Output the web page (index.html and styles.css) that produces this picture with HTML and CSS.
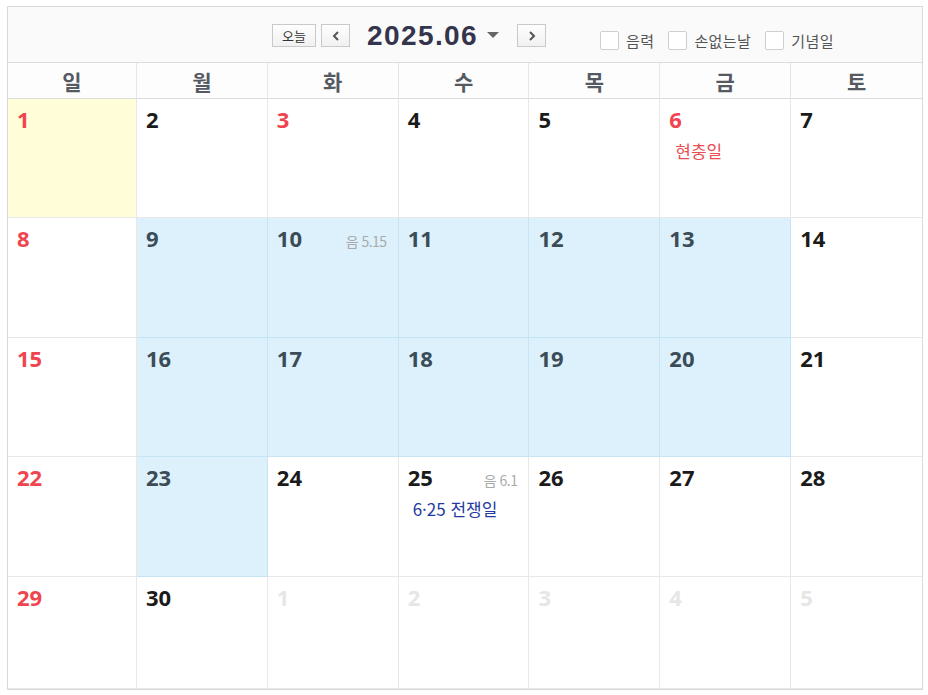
FILE: index.html
```html
<!DOCTYPE html>
<html lang="ko">
<head>
<meta charset="utf-8">
<link rel="stylesheet" href="styles.css">
</head>
<body>
<div class="cal">
  <div class="toolbar">
    <div class="nav">
      <button class="btn today">오늘</button>
      <button class="btn arrow"><svg width="10" height="12" viewBox="0 0 10 12"><path d="M7 2 L3 6 L7 10" fill="none" stroke="#555" stroke-width="2"/></svg></button>
      <div class="title">2025.06<svg class="caret" width="12" height="7" viewBox="0 0 12 7"><path d="M0 0 H12 L6 6 Z" fill="#666"/></svg></div>
      <button class="btn arrow"><svg width="10" height="12" viewBox="0 0 10 12"><path d="M3 2 L7 6 L3 10" fill="none" stroke="#555" stroke-width="2"/></svg></button>
    </div>
    <div class="opts">
      <label class="opt"><span class="box"></span>음력</label>
      <label class="opt"><span class="box"></span>손없는날</label>
      <label class="opt"><span class="box"></span>기념일</label>
    </div>
  </div>
  <div class="grid">
    <div class="wd">일</div><div class="wd">월</div><div class="wd">화</div><div class="wd">수</div><div class="wd">목</div><div class="wd">금</div><div class="wd">토</div>

    <div class="cell today-cell"><span class="num red">1</span></div>
    <div class="cell"><span class="num">2</span></div>
    <div class="cell"><span class="num red">3</span></div>
    <div class="cell"><span class="num">4</span></div>
    <div class="cell"><span class="num">5</span></div>
    <div class="cell"><span class="num red">6</span><div class="ev red">현충일</div></div>
    <div class="cell"><span class="num">7</span></div>

    <div class="cell"><span class="num red">8</span></div>
    <div class="cell blue"><span class="num">9</span></div>
    <div class="cell blue"><div class="top"><span class="num">10</span><span class="lunar">음 5.15</span></div></div>
    <div class="cell blue"><span class="num">11</span></div>
    <div class="cell blue"><span class="num">12</span></div>
    <div class="cell blue"><span class="num">13</span></div>
    <div class="cell"><span class="num">14</span></div>

    <div class="cell"><span class="num red">15</span></div>
    <div class="cell blue"><span class="num">16</span></div>
    <div class="cell blue"><span class="num">17</span></div>
    <div class="cell blue"><span class="num">18</span></div>
    <div class="cell blue"><span class="num">19</span></div>
    <div class="cell blue"><span class="num">20</span></div>
    <div class="cell"><span class="num">21</span></div>

    <div class="cell"><span class="num red">22</span></div>
    <div class="cell blue"><span class="num">23</span></div>
    <div class="cell"><span class="num">24</span></div>
    <div class="cell"><div class="top"><span class="num">25</span><span class="lunar">음 6.1</span></div><div class="ev navy">6·25 전쟁일</div></div>
    <div class="cell"><span class="num">26</span></div>
    <div class="cell"><span class="num">27</span></div>
    <div class="cell"><span class="num">28</span></div>

    <div class="cell"><span class="num red">29</span></div>
    <div class="cell"><span class="num">30</span></div>
    <div class="cell"><span class="num dim">1</span></div>
    <div class="cell"><span class="num dim">2</span></div>
    <div class="cell"><span class="num dim">3</span></div>
    <div class="cell"><span class="num dim">4</span></div>
    <div class="cell"><span class="num dim">5</span></div>
  </div>
</div>
</body>
</html>
```
FILE: styles.css
```css
* { box-sizing: border-box; }
body {
  margin: 0;
  background: #fff;
  font-family: "Noto Sans CJK KR", "Noto Sans", sans-serif;
}
.cal {
  margin: 6px 0 0 7px;
  width: 916px;
  height: 684px;
  border: 1px solid #d9d9d9;
  display: flex;
  flex-direction: column;
  overflow: hidden;
}
.toolbar {
  height: 56px;
  background: #fafafa;
  border-bottom: 1px solid #dcdcdc;
  display: flex;
  align-items: center;
  padding-left: 264px;
  gap: 54px;
}
.nav {
  display: flex;
  align-items: center;
  gap: 5px;
  margin-top: 2px;
}
.btn {
  height: 23px;
  border: 1px solid #c9c9c9;
  background: linear-gradient(#fefefe, #f1f1f1);
  padding: 0;
  display: flex;
  align-items: center;
  justify-content: center;
  font-family: "Noto Sans CJK KR", sans-serif;
  font-size: 13px;
  color: #333;
}
.btn.today { width: 44px; }
.btn.arrow { width: 29px; }
.title {
  font-family: "Liberation Sans", Arial, sans-serif;
  font-weight: bold;
  font-size: 28px;
  color: #34344c;
  display: flex;
  align-items: center;
  margin: 0 13px 0 12px;
  letter-spacing: 1.4px;
}
.caret { margin-left: 9px; }
.opts {
  display: flex;
  gap: 14px;
  margin-top: 12px;
}
.opt {
  display: flex;
  align-items: center;
  gap: 7px;
  font-size: 15px;
  letter-spacing: 0.4px;
  color: #555;
}
.box {
  width: 19px;
  height: 19px;
  border: 1px solid #cfcfcf;
  background: #fff;
  border-radius: 2px;
}
.grid {
  display: grid;
  grid-template-columns: 129px repeat(6, 1fr);
  grid-template-rows: 36px 119px 120px 119px 120px 1fr;
  flex: 1;
}
.wd {
  display: flex;
  align-items: center;
  justify-content: center;
  font-size: 21px;
  font-weight: 700;
  color: #555a62;
  border-right: 1px solid #e6e6e6;
  border-bottom: 1px solid #dcdcdc;
  background: #fdfdfd;
}
.wd:nth-child(7n) { border-right: none; }
.cell {
  border-right: 1px solid #e8e8e8;
  border-bottom: 1px solid #e8e8e8;
  padding: 6px 11px 0 9px;
}
.cell:nth-child(7n) { border-right: none; }
.today-cell { background: #fffed8; }
.blue {
  background: #dcf1fb;
  border-color: #c6e4f3;
}
.blue .num { color: #3b4c57; }
.top {
  display: flex;
  justify-content: space-between;
  align-items: baseline;
}
.num {
  font-family: "Open Sans", sans-serif;
  font-weight: 700;
  font-size: 22px;
  color: #1b1b1b;
  line-height: 28px;
}
.num.red { color: #f0444e; }
.num.dim { color: #e6e6e6; }
.lunar {
  font-size: 14px;
  color: #aaa;
  letter-spacing: -0.5px;
}
.ev {
  font-size: 17px;
  margin-top: 5px;
  padding-left: 6px;
}
.ev.red { color: #e94c52; }
.ev.navy { color: #233d9e; padding-left: 5px; }
```
